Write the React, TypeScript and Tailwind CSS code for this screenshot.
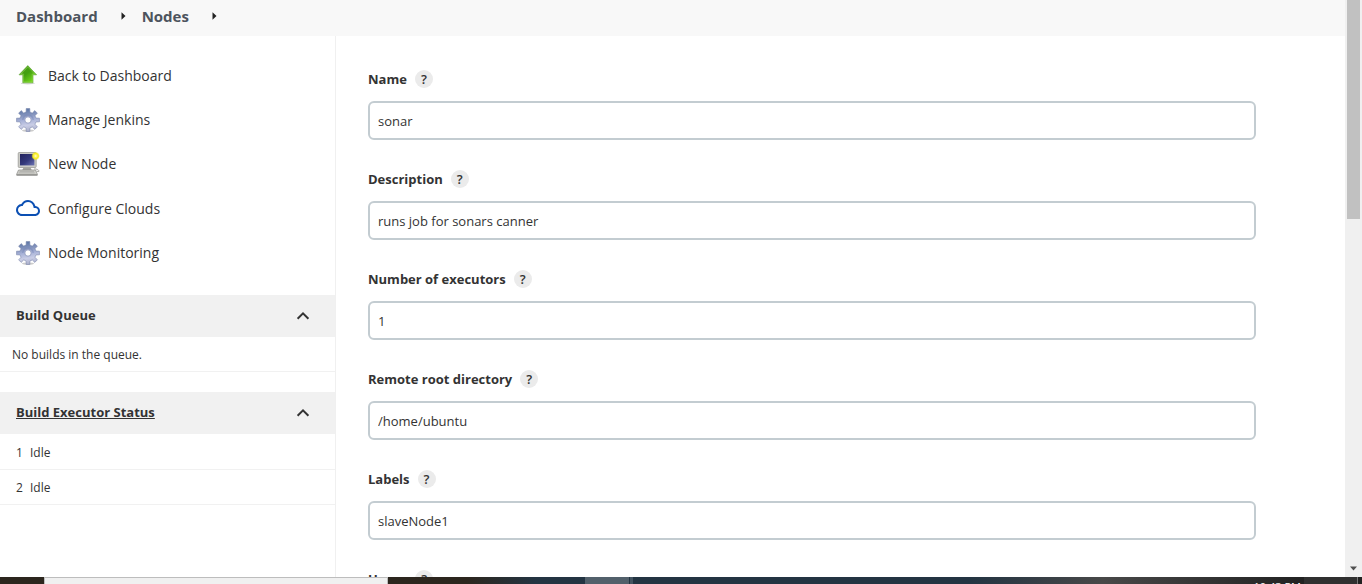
import { useState, type ReactNode } from "react";

function ArrowUpIcon() {
  return (
    <svg viewBox="0 0 24 24" className="size-6" aria-hidden="true">
      <defs>
        <linearGradient id="arrow-green" x1="0" y1="0" x2="0.8" y2="1">
          <stop offset="0" stopColor="#4c9a1e" />
          <stop offset="0.5" stopColor="#43a010" />
          <stop offset="1" stopColor="#7be01e" />
        </linearGradient>
      </defs>
      <ellipse cx="11.8" cy="20.4" rx="7" ry="1" fill="#000" opacity="0.15" />
      <path d="M11.8 2.6 20.6 11.8H17V19.8H6.8V11.8H3Z" fill="url(#arrow-green)" stroke="#6fb044" strokeWidth="0.7" strokeLinejoin="round" />
      <path d="M11.8 4 18.6 11H16.2V19H7.6V11H5Z" fill="none" stroke="#a4e05f" strokeWidth="0.7" opacity="0.6" />
    </svg>
  );
}

const TOOTH: [number, number][] = [
  [-22, 8],
  [-13, 8.4],
  [-9, 11.6],
  [9, 11.6],
  [13, 8.4],
];

const GEAR_PATH =
  Array.from({ length: 8 }, (_, i) => i * 45)
    .flatMap((base) =>
      TOOTH.map(([offset, radius]) => {
        const a = ((base + offset) * Math.PI) / 180;
        return `${(12 + radius * Math.sin(a)).toFixed(2)} ${(12 - radius * Math.cos(a)).toFixed(2)}`;
      }),
    )
    .reduce((path, point, i) => path + (i === 0 ? "M" : "L") + point, "") + "Z";

function GearIcon({ id }: { id: string }) {
  return (
    <svg viewBox="0 0 24 24" className="size-6" aria-hidden="true">
      <defs>
        <linearGradient id={id} x1="0.45" y1="0" x2="0.6" y2="1">
          <stop offset="0" stopColor="#5b76a6" />
          <stop offset="0.3" stopColor="#8796bf" />
          <stop offset="0.5" stopColor="#a9b3d8" />
          <stop offset="0.72" stopColor="#c9cde6" />
          <stop offset="1" stopColor="#a9adc8" />
        </linearGradient>
      </defs>
      <ellipse cx="12" cy="22.6" rx="6" ry="1.1" fill="#000" opacity="0.2" />
      <path d={GEAR_PATH} fill={`url(#${id})`} stroke="#7c88ac" strokeWidth="0.6" strokeLinejoin="round" />
      <path d="M6.8 12a5.2 5.2 0 0 1 10.4 0" fill="none" stroke="#7889b8" strokeWidth="1.3" opacity="0.55" />
      <circle cx="12" cy="12" r="3.2" fill="#fff" stroke="#929bc0" strokeWidth="0.9" />
    </svg>
  );
}

function ComputerIcon() {
  return (
    <svg viewBox="0 0 24 24" className="size-6" aria-hidden="true">
      <defs>
        <linearGradient id="screen-blue" x1="0" y1="0" x2="1" y2="1">
          <stop offset="0" stopColor="#23235c" />
          <stop offset="0.55" stopColor="#34397c" />
          <stop offset="1" stopColor="#6d74b4" />
        </linearGradient>
        <radialGradient id="star-glow">
          <stop offset="0" stopColor="#fffce0" />
          <stop offset="0.3" stopColor="#fff56a" />
          <stop offset="0.65" stopColor="#f5ec1c" />
          <stop offset="1" stopColor="#f5ec1c" stopOpacity="0.1" />
        </radialGradient>
      </defs>
      <rect x="2.2" y="0.5" width="18" height="15" rx="1" fill="#cbcbc6" stroke="#94948f" strokeWidth="0.7" />
      <rect x="4" y="2" width="14.4" height="11.4" fill="url(#screen-blue)" />
      <path d="M7.5 15.5H14.5L16 18.5H6Z" fill="#a4a49f" />
      <path d="M2.5 18H19.5L21.5 22.5H0.5Z" fill="#cfcfca" stroke="#8b8b86" strokeWidth="0.7" />
      <path d="M3.6 19.4H18M2.8 20.9H18.6" stroke="#a0a09b" strokeWidth="0.6" />
      <path d="M0.5 23.2H21.5" stroke="#73736f" strokeWidth="0.9" />
      <path d="M18 17C21 16.8 23.4 18 22.8 19.6L20.6 19.2" fill="none" stroke="#a9a9a4" strokeWidth="1" />
      <circle cx="19.6" cy="4" r="4.2" fill="url(#star-glow)" />
    </svg>
  );
}

function CloudIcon() {
  return (
    <svg viewBox="0 0 24 24" className="size-6" aria-hidden="true" fill="#0b4fb3">
      <path d="M19.35 10.04A7.49 7.49 0 0 0 12 4C9.11 4 6.6 5.64 5.35 8.04A5.994 5.994 0 0 0 0 14c0 3.31 2.69 6 6 6h13c2.76 0 5-2.24 5-5 0-2.64-2.05-4.78-4.65-4.96zM19 18H6c-2.21 0-4-1.79-4-4 0-2.05 1.53-3.76 3.56-3.97l1.07-.11.5-.95A5.469 5.469 0 0 1 12 6c2.62 0 4.88 1.86 5.39 4.43l.3 1.5 1.53.11A2.98 2.98 0 0 1 22 15c0 1.65-1.35 3-3 3z" />
    </svg>
  );
}

function ChevronUp({ open }: { open: boolean }) {
  return (
    <svg viewBox="0 0 14 14" className={open ? "size-3.5" : "size-3.5 rotate-180"} aria-hidden="true">
      <path d="M1.6 9.8 7 4.4 12.4 9.8" fill="none" stroke="#333" strokeWidth="2" />
    </svg>
  );
}

function Separator() {
  return (
    <svg viewBox="0 0 5 8" className="h-2 w-[5px]" aria-hidden="true">
      <path d="M0.5 0.3V7.7L4.5 4Z" fill="#222" />
    </svg>
  );
}

const TASKS: { label: string; icon: ReactNode }[] = [
  { label: "Back to Dashboard", icon: <ArrowUpIcon /> },
  { label: "Manage Jenkins", icon: <GearIcon id="gear-manage" /> },
  { label: "New Node", icon: <ComputerIcon /> },
  { label: "Configure Clouds", icon: <CloudIcon /> },
  { label: "Node Monitoring", icon: <GearIcon id="gear-monitor" /> },
];

function Panel({ title, link, children }: { title: string; link?: boolean; children: ReactNode }) {
  const [open, setOpen] = useState(true);
  return (
    <section className="mb-5">
      <div className="flex h-[42px] items-center justify-between bg-[#f1f1f1] pr-[25px] pl-4">
        <h2 className="pb-0.5 text-[13px] leading-5 font-bold">
          {link ? <a href="#executors" className="underline">{title}</a> : title}
        </h2>
        <button type="button" aria-label={`Toggle ${title}`} aria-expanded={open} onClick={() => setOpen(!open)}>
          <ChevronUp open={open} />
        </button>
      </div>
      {open && children}
    </section>
  );
}

function Label({ id, text }: { id: string; text: string }) {
  return (
    <div className="mb-[13px] flex h-[18px] items-center gap-2">
      <label htmlFor={id} className="text-[13px] leading-[18px] font-bold">{text}</label>
      <button
        type="button"
        aria-label={`Help for ${text}`}
        className="flex size-[18px] items-center justify-center rounded-full bg-[#ebebeb] text-[13px] leading-[18px] font-semibold"
      >
        ?
      </button>
    </div>
  );
}

const FIELDS = [
  { id: "name", label: "Name", value: "sonar" },
  { id: "description", label: "Description", value: "runs job for sonars canner" },
  { id: "executors-count", label: "Number of executors", value: "1" },
  { id: "remote-root", label: "Remote root directory", value: "/home/ubuntu" },
  { id: "labels", label: "Labels", value: "slaveNode1" },
];

const CONTROL = "block h-[39px] w-full rounded-md border-2 border-[#c3ccd1] bg-white px-2 text-[13px] text-[#333] outline-none focus:border-[#0b6aa2]";

export default function App() {
  return (
    <div className="flex h-screen flex-col overflow-hidden bg-white font-['Open_Sans','Noto_Sans',sans-serif] text-[#333]">
      <div className="flex min-h-0 flex-1">
        <div className="flex min-w-0 flex-1 flex-col overflow-hidden">
          <nav aria-label="Breadcrumb" className="flex h-9 shrink-0 items-center bg-[#f8f8f8] pb-1 pl-4 text-[15px] font-bold text-[#4d545d]">
            <a href="#dashboard" className="mr-[23px]">Dashboard</a>
            <Separator />
            <a href="#nodes" className="mr-[23px] ml-4">Nodes</a>
            <Separator />
          </nav>
          <div className="flex min-h-0 flex-1">
            <aside className="w-[336px] shrink-0 overflow-hidden border-r border-[#f0f0f0] pt-[17px]">
              <ul className="mb-5 grid h-[222px] grid-rows-5">
                {TASKS.map((task) => (
                  <li key={task.label} className="flex">
                    <a href="#task" className="flex items-center gap-2 pl-4 text-[14px] font-medium">
                      {task.icon}
                      {task.label}
                    </a>
                  </li>
                ))}
              </ul>
              <Panel title="Build Queue">
                <p className="border-b border-[#f1f1f1] pt-0.5 pl-3 text-xs leading-8">No builds in the queue.</p>
              </Panel>
              <Panel title="Build Executor Status" link>
                <table className="mt-px w-full text-left text-xs leading-8">
                  <tbody>
                    {[1, 2].map((n) => (
                      <tr key={n} className="border-b border-[#f1f1f1]">
                        <td className="w-[30px] pt-0.5 pl-4">{n}</td>
                        <td className="pt-0.5">Idle</td>
                      </tr>
                    ))}
                  </tbody>
                </table>
              </Panel>
            </aside>
            <main className="min-w-0 flex-1 overflow-hidden pt-[34px] pr-[89px] pl-8">
              <form>
                {FIELDS.map((field) => (
                  <div key={field.id} className="mb-[30px]">
                    <Label id={field.id} text={field.label} />
                    <input id={field.id} type="text" defaultValue={field.value} className={CONTROL} />
                  </div>
                ))}
                <div>
                  <Label id="usage" text="Usage" />
                  <select id="usage" className={CONTROL} />
                </div>
              </form>
            </main>
          </div>
        </div>
        <div className="flex w-[17px] shrink-0 flex-col items-center justify-between bg-[#f0f0f0]" aria-hidden="true">
          <div className="h-[219px] w-[13px] bg-[#c1c1c1]" />
          <svg viewBox="0 0 17 17" className="size-[17px]">
            <path d="M5 6.5H12L8.5 10.5Z" fill="#505050" />
          </svg>
        </div>
      </div>
      <footer className="flex h-[7px] shrink-0 overflow-hidden bg-[#233442]">
        <div className="w-11 bg-[#2c261e]" />
        <div className="w-[344px] border border-b-0 border-[#bdbdbd] bg-[#f0f0f0]" />
        <div className="w-[197px] bg-linear-to-r from-[#2c261e] from-40% to-[#233442] to-75%" />
        <div className="w-11 bg-[#52606b]" />
        <div className="mx-px w-[3px] bg-[#435360]" />
        <div className="flex flex-1 justify-end overflow-hidden bg-linear-to-r from-[#233442] from-50% via-[#484848] via-70% to-[#222]">
          <time className="mr-[3px] pt-[2px] text-[11px] leading-4 text-white">10:43 PM</time>
        </div>
        <div className="w-[53px] bg-[#303030]" />
        <div className="w-px bg-[#777]" />
        <div className="w-1 bg-[#222]" />
      </footer>
    </div>
  );
}
